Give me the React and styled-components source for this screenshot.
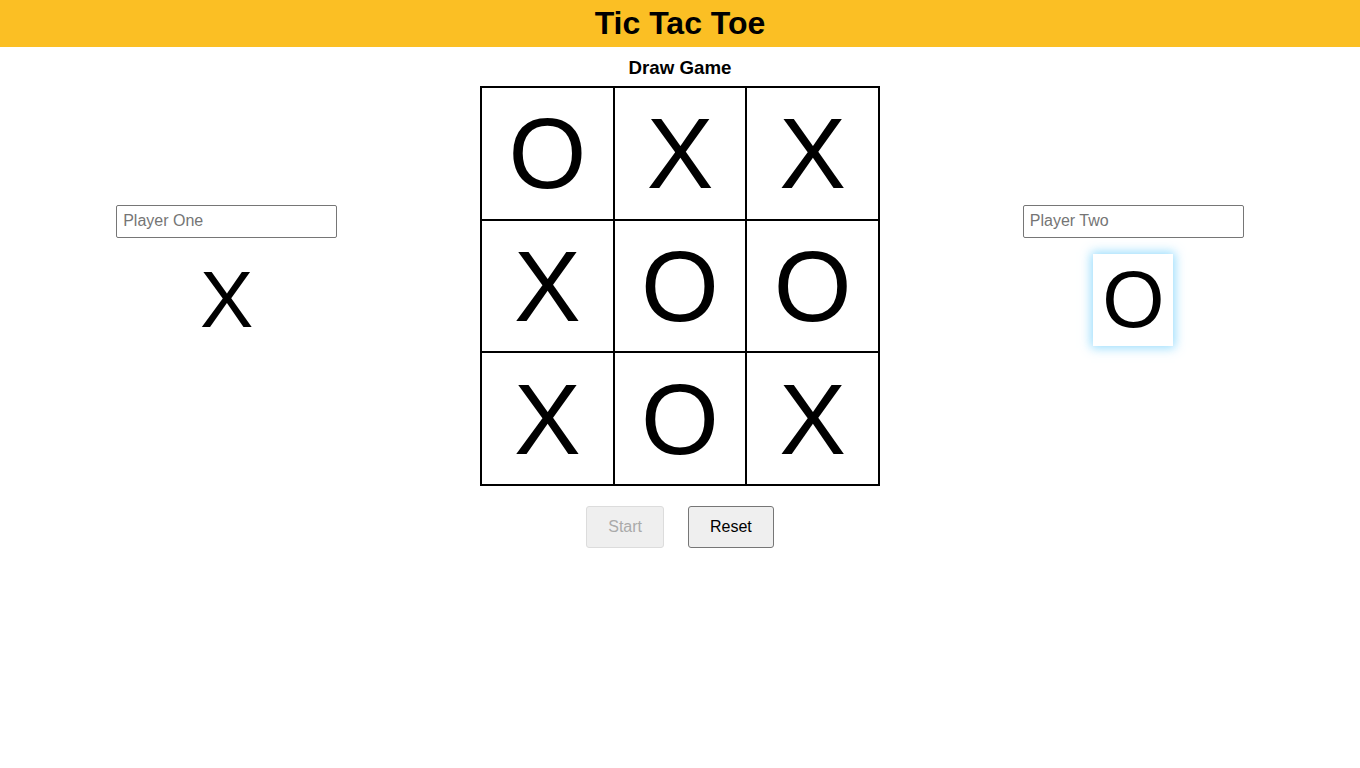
import React from "react";
import styled, { createGlobalStyle } from "styled-components";

const GlobalStyle = createGlobalStyle`
  body {
    margin: 0;
    font-family: "Liberation Sans", Arial, sans-serif;
    background: #fff;
    color: #000;
  }
`;

const Header = styled.header`
  background-color: #fbbf24;
  height: 47px;
  display: flex;
  align-items: center;
  justify-content: center;
`;

const Title = styled.h1`
  margin: 0;
  font-size: 32px;
  font-weight: bold;
`;

const Status = styled.div`
  text-align: center;
  font-size: 18.72px;
  font-weight: bold;
  padding-top: 10px;
  height: 29px;
`;

const GameRow = styled.div`
  display: flex;
  justify-content: space-around;
  align-items: center;
`;

const SideColumn = styled.div`
  width: 400px;
  display: flex;
  flex-direction: column;
  align-items: center;
  gap: 16px;
  padding-bottom: 21px;
`;

const NameInput = styled.input`
  width: 221px;
  height: 33px;
  box-sizing: border-box;
  padding: 0 6px 2px;
  font-size: 16px;
  font-family: "Liberation Sans", Arial, sans-serif;
  border: 1px solid #767676;
  border-radius: 2px;
  outline: none;
  &::placeholder {
    color: #757575;
  }
`;

const Marker = styled.div`
  width: 80px;
  height: 92px;
  display: flex;
  align-items: center;
  justify-content: center;
  font-size: 80px;
  background: #fff;
  box-shadow: ${(p) =>
    p.active ? "0 0 10px 2px rgba(125, 211, 252, 0.8)" : "none"};
`;

const Board = styled.div`
  width: 400px;
  height: 400px;
  box-sizing: border-box;
  border: 1px solid #000;
  display: grid;
  grid-template-columns: repeat(3, 1fr);
  grid-template-rows: repeat(3, 1fr);
`;

const Cell = styled.div`
  border: 1px solid #000;
  display: flex;
  align-items: center;
  justify-content: center;
  font-size: 100px;
  line-height: 1;
`;

const ButtonRow = styled.div`
  display: flex;
  justify-content: center;
  gap: 24px;
  margin-top: 20px;
`;

const Button = styled.button`
  height: 42px;
  padding: 0 21px;
  font-size: 16px;
  font-family: "Liberation Sans", Arial, sans-serif;
  border-radius: 3px;
  background: #efefef;
  border: 1px solid ${(p) => (p.disabled ? "#dcdcdc" : "#767676")};
  color: ${(p) => (p.disabled ? "#aaaaaa" : "#000")};
`;

const cells = ["O", "X", "X", "X", "O", "O", "X", "O", "X"];

export default function App() {
  return (
    <>
      <GlobalStyle />
      <Header>
        <Title>Tic Tac Toe</Title>
      </Header>
      <Status>Draw Game</Status>
      <GameRow>
        <SideColumn>
          <NameInput placeholder="Player One" />
          <Marker>X</Marker>
        </SideColumn>
        <Board>
          {cells.map((c, i) => (
            <Cell key={i}>{c}</Cell>
          ))}
        </Board>
        <SideColumn>
          <NameInput placeholder="Player Two" />
          <Marker active>O</Marker>
        </SideColumn>
      </GameRow>
      <ButtonRow>
        <Button disabled>Start</Button>
        <Button>Reset</Button>
      </ButtonRow>
    </>
  );
}
